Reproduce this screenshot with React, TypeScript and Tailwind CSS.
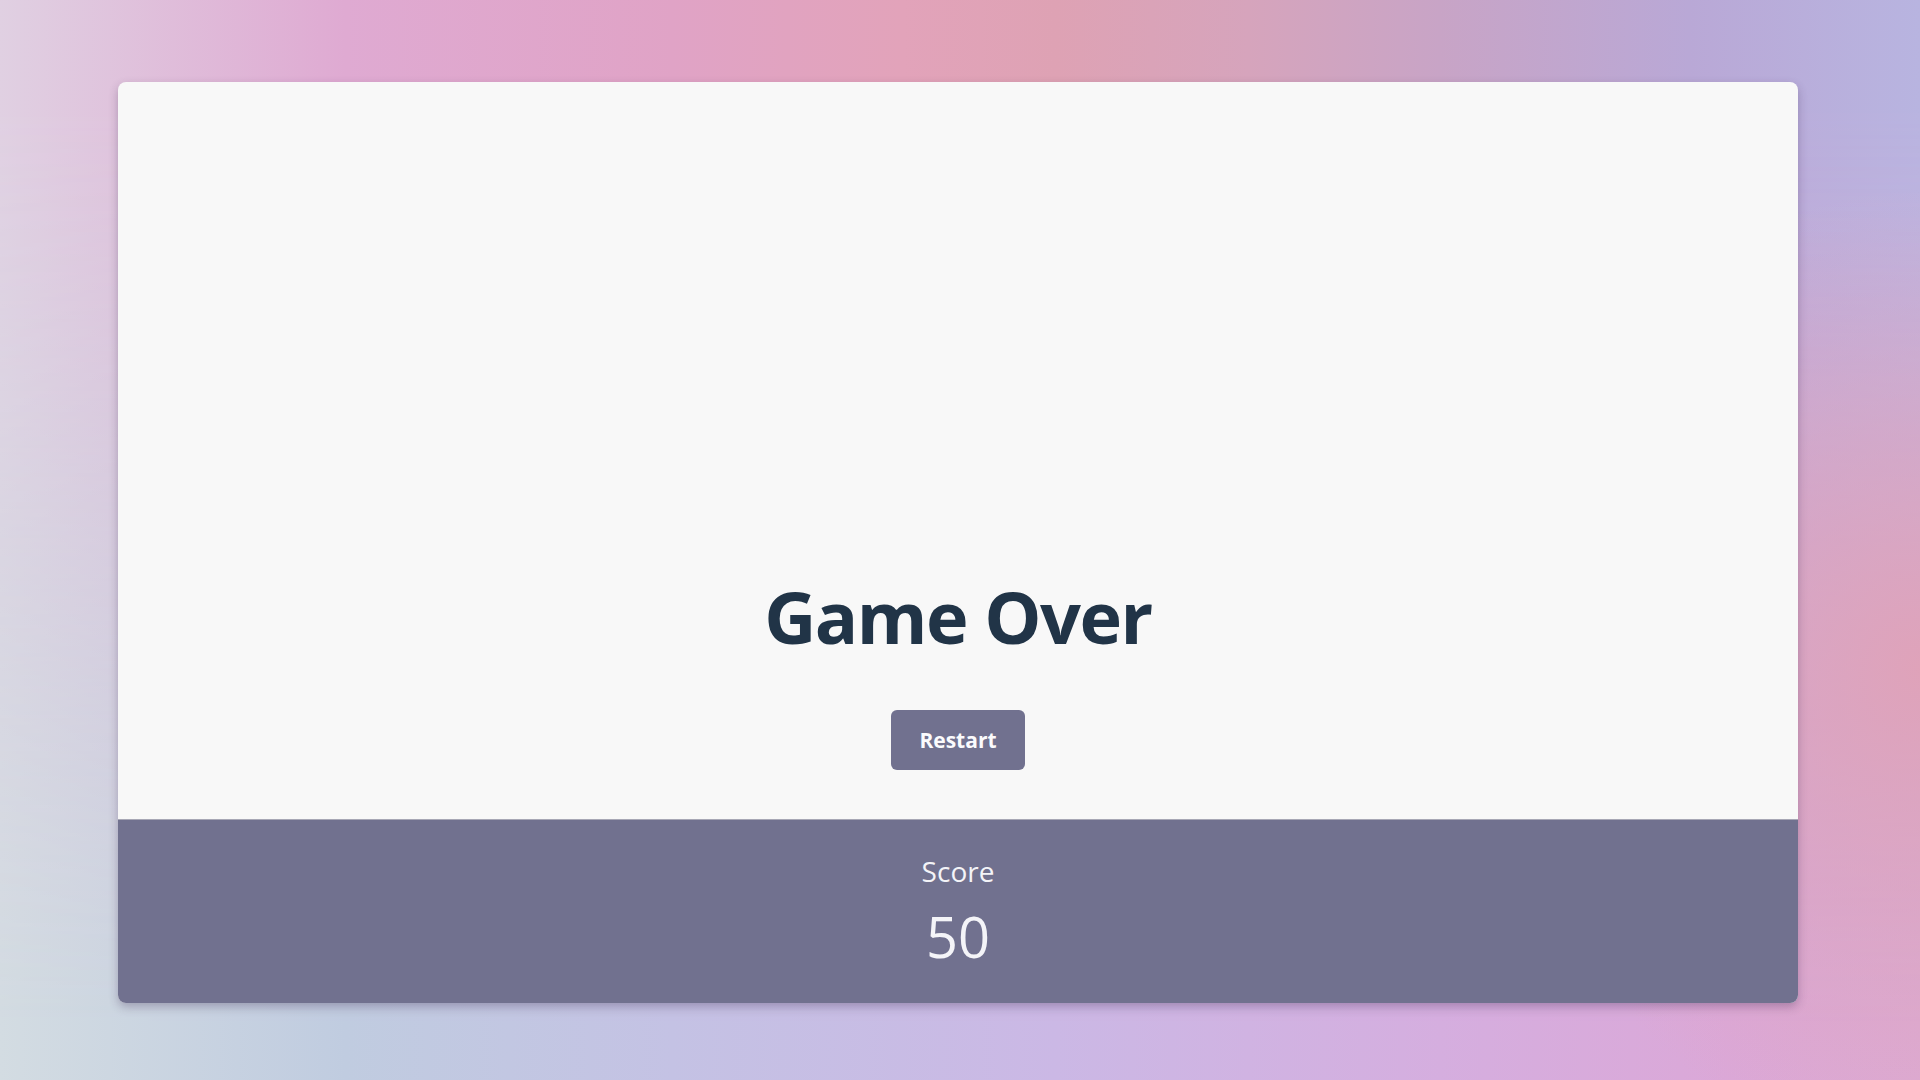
import React from "react";

export default function App() {
  return (
    <div
      className="relative w-full h-[1080px] overflow-hidden bg-[linear-gradient(to_right,#d3dce2_0%,#c0cce0_18%,#c4c2e4_35%,#cbb8e5_55%,#d5aedf_75%,#dba8d8_90%,#dcaad3_100%)]"
      style={{ fontFamily: '"Open Sans", "Noto Sans", sans-serif' }}
    >
      <div className="absolute inset-0 bg-[linear-gradient(to_right,#e0d0e2_0%,#dfaad2_18%,#e0a3c6_35%,#e2a3ba_47%,#dea2b4_55%,#d6a4bc_65%,#c8a4c6_75%,#b9a8d6_88%,#b8b4e0_100%)] [mask-image:linear-gradient(to_bottom,black_0%,black_10%,transparent_95%)]" />
      <div className="absolute inset-0 bg-[radial-gradient(ellipse_420px_480px_at_100%_62%,rgba(224,162,184,0.95),rgba(224,162,184,0)_100%)]" />
      <div className="relative flex pl-[118px] pt-[82px]">
        <div className="w-[1680px] h-[921px] rounded-lg overflow-hidden bg-[#f8f8f8] shadow-[0_4px_10px_rgba(60,40,80,0.3)] flex flex-col">
          <div className="flex-1 flex flex-col items-center justify-end pb-[49px]">
            <h1 className="text-[72px] leading-none font-bold text-[#213447] tracking-[-1.5px]">Game Over</h1>
            <button className="mt-[58px] w-[134px] h-[60px] rounded-md bg-[#71718f] text-[#fbfbfd] font-bold text-[21px] pt-[2px]">
              Restart
            </button>
          </div>
          <div className="h-[184px] bg-[#71718f] border-t border-[#a7a7b5] flex flex-col items-center pt-[37px] text-[#f4f4f8]">
            <div className="text-[28px] leading-none">Score</div>
            <div className="text-[56px] leading-none mt-[23px]">50</div>
          </div>
        </div>
      </div>
    </div>
  );
}
